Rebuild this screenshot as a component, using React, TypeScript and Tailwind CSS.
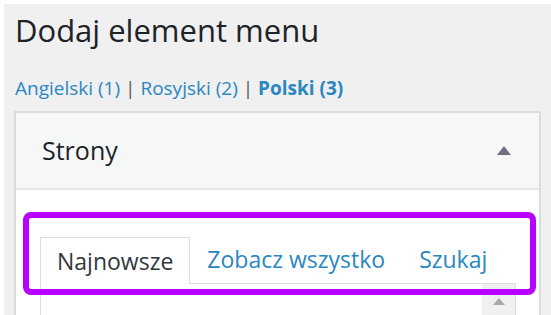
import React from 'react';

const TABS = ['Najnowsze', 'Zobacz wszystko', 'Szukaj'];

const App: React.FC = () => {
    return (
        <div className="w-[551px] h-[315px] overflow-hidden bg-white pt-[4px] pl-[4px] font-['Open_Sans',sans-serif]">
            <div className="relative h-full bg-[#f0f0f1] pt-[6px]">
                <h2 className="pl-[11px] text-[31px] leading-[40px] text-[#1d2327] font-normal">
                    Dodaj element menu
                </h2>

                <p className="mt-[25px] pl-[11px] text-[19px] leading-[26px] text-[#2a87c0]">
                    <a>Angielski (1)</a>
                    <span className="text-[#50575e]"> | </span>
                    <a>Rosyjski (2)</a>
                    <span className="text-[#50575e]"> | </span>
                    <a className="font-bold">Polski (3)</a>
                </p>

                <div className="mt-[10px] ml-[10px] w-[527px] border-2 border-[#dcdcde] bg-white">
                    <div className="h-[77px] flex items-center justify-between pl-[26px] pr-[28px] bg-[#f6f7f7] border-b-2 border-[#e2e4e7]">
                        <h3 className="text-[25px] text-[#1d2327] font-normal">Strony</h3>
                        <svg width="14" height="9" viewBox="0 0 14 9">
                            <path d="M7 0 L14 9 L0 9 Z" fill="#6e6f80" />
                        </svg>
                    </div>

                    <div className="pt-[46px] pl-[24px] pr-[23px]">
                        <div className="flex items-end">
                            {TABS.map((tab, i) => (
                                <div
                                    key={tab}
                                    className={i === 0
                                        ? 'relative z-10 -mb-px h-[47px] px-[16px] flex items-center bg-white border border-b-0 border-[#dcdcde] text-[23px] text-[#32373c]'
                                        : 'h-[47px] px-[17px] flex items-center text-[23px] text-[#2a87c0]'}
                                >
                                    {tab}
                                </div>
                            ))}
                        </div>
                        <div className="h-[40px] border border-[#dcdcde] flex justify-end">
                            <div className="w-[33px] bg-[#f0f0f1] flex justify-center pt-[14px]">
                                <svg width="12" height="7" viewBox="0 0 12 7">
                                    <path d="M6 0 L12 7 L0 7 Z" fill="#a7aaad" />
                                </svg>
                            </div>
                        </div>
                    </div>
                </div>

                <div className="absolute left-[19px] top-[208px] w-[513px] h-[83px] border-[6px] border-[#b800ff] rounded-[8px]" />
            </div>
        </div>
    );
};

export default App;
